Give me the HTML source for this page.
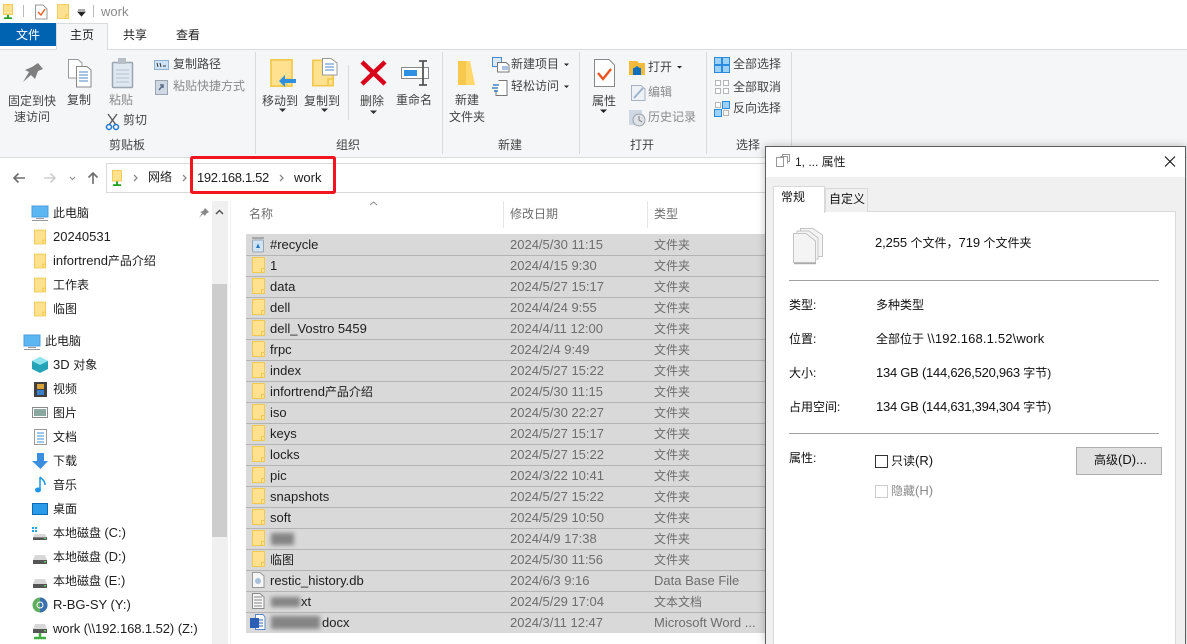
<!DOCTYPE html>
<html><head><meta charset="utf-8"><title>work</title>
<style>
html,body{margin:0;padding:0;background:#fff}
body{width:1187px;height:644px;overflow:hidden;position:relative;font-family:"Liberation Sans","Microsoft YaHei","Noto Sans CJK SC",sans-serif;font-size:12px;color:#1e1e1e}
.b{position:absolute}
.t{position:absolute;white-space:nowrap;line-height:16px;height:16px}
.l{font-size:13px}
.g{color:#8a8a8a}
.d{color:#6d6d6d;font-size:13px}
.r{color:#444}
.y{margin-top:1px}
.blur{position:absolute;background:#858585;filter:blur(2px)}
</style></head><body>
<div class="b" style="left:0;top:50px;width:1187px;height:107px;background:#f5f6f7;border-bottom:1px solid #dadbdc"></div>
<div class="b" style="left:0;top:49px;width:1187px;height:1px;background:#dadbdc"></div>
<div class="b" style="left:0;top:23px;width:56px;height:23px;background:#0063b1"></div>
<div class="b" style="left:56px;top:23px;width:52px;height:27px;background:#f5f6f7;border:1px solid #dadbdc;border-bottom:0;box-sizing:border-box"></div>
<div class="b" style="left:106px;top:163px;width:660px;height:30px;border:1px solid #d9d9d9;box-sizing:border-box"></div>
<div class="b" style="left:255px;top:52px;width:1px;height:102px;background:#dadbdc"></div>
<div class="b" style="left:348px;top:65px;width:1px;height:55px;background:#dadbdc"></div>
<div class="b" style="left:442px;top:52px;width:1px;height:102px;background:#dadbdc"></div>
<div class="b" style="left:579px;top:52px;width:1px;height:102px;background:#dadbdc"></div>
<div class="b" style="left:706px;top:52px;width:1px;height:102px;background:#dadbdc"></div>
<div class="b" style="left:791px;top:52px;width:1px;height:102px;background:#dadbdc"></div>
<div class="b" style="left:212px;top:201px;width:16px;height:443px;background:#f0f0f0"></div>
<div class="b" style="left:212px;top:284px;width:15px;height:253px;background:#cdcdcd"></div>
<div class="b" style="left:230px;top:201px;width:1px;height:443px;background:#f0f0f0"></div>
<div class="b" style="left:503px;top:201px;width:1px;height:27px;background:#e5e5e5"></div>
<div class="b" style="left:647px;top:201px;width:1px;height:27px;background:#e5e5e5"></div>
<div class="b" style="left:246px;top:234px;width:520px;height:1px;background:#d9d9d9"></div>
<div class="b" style="left:246px;top:235px;width:520px;height:398px;background:repeating-linear-gradient(#d9d9d9 0,#d9d9d9 20px,#b4b4b4 20px,#b4b4b4 21px)"></div>

<svg class="b" style="left:0;top:0" width="1187" height="644" viewBox="0 0 1187 644">
<defs>
<symbol id="f" viewBox="0 0 13 16" overflow="visible"><path d="M.5.5H12.5V15.500H.5Z" fill="#ffe18f" stroke="#f2c94f"/><path d="M9.500 15.500V11.500H12.500" fill="#ffe18f" stroke="#f2c94f"/></symbol>
<symbol id="disk" viewBox="0 0 14 9" preserveAspectRatio="none" overflow="visible"><path d="M2 0H12L14 5H0Z" fill="#d8d8d8"/><path d="M0 5H14V9H0Z" fill="#555"/><rect x="11" y="6" width="2" height="1.500" fill="#5fd35f"/></symbol>
<symbol id="net" viewBox="0 0 11 18" preserveAspectRatio="none" overflow="visible"><path d="M.5.5H10.500V12.500H.5Z" fill="#ffe18f" stroke="#f2c94f"/><path d="M5.500 13V16M1 17H10" stroke="#1f9d1f" stroke-width="2"/></symbol>
</defs>
<!-- quick access bar -->
<use href="#net" x="3" y="4" width="10" height="15"/>
<path d="M23.500 5V17" stroke="#bbb"/>
<path d="M35.500 5H43L47 9V19H35.500Z" fill="#fff" stroke="#999"/><path d="M38 12L41 15L45 9" fill="none" stroke="#e8622a" stroke-width="1.500"/>
<use href="#f" x="57" y="4" width="12" height="15"/>
<path d="M78 10H85M78 12L85 12L81.500 16Z" fill="#222" stroke="#222" stroke-width=".8"/>
<path d="M93.500 5V17" stroke="#bbb"/>
<!-- ribbon icons -->
<path d="M38 63L43 69L38 71L35 79L31 75L23 82L29 72L25 70L32 67Z" fill="#7f7f7f"/>
<path d="M68.500 59.500H78L82 63V78H68.500Z" fill="#fff" stroke="#999"/><path d="M76.500 66.500H87L91 70V87H76.500Z" fill="#fff" stroke="#888"/><path d="M79 72H88M79 75H88M79 78H88M79 81H88" stroke="#4f86c6"/>
<rect x="112.500" y="62.500" width="20" height="25" rx="1" fill="#dfe7f1" stroke="#9aa5b2" stroke-width="1.500"/><path d="M116 70H129M116 74H129M116 78H129M116 82H129" stroke="#b6c3d4"/><rect x="118" y="58" width="8" height="6" fill="#b8bec6"/>
<path d="M108 114L116 125M117 114L109 125" stroke="#555" stroke-width="1.300"/><circle cx="109" cy="127" r="2.500" fill="none" stroke="#1e78d0" stroke-width="1.500"/><circle cx="116" cy="127" r="2.500" fill="none" stroke="#1e78d0" stroke-width="1.500"/>
<rect x="154.500" y="60.500" width="14" height="9" fill="#cfe3f7" stroke="#8fb0d0"/><path d="M157 63L158 67M160 63L161 67M163 66H166" stroke="#333"/>
<rect x="155.500" y="80.500" width="12" height="14" fill="#cfd8e3" stroke="#9aa5b2"/><path d="M159 90L163 85M160 85H163V88" stroke="#5b6e88" stroke-width="1.500" fill="none"/>
<use href="#f" x="270" y="59" width="23" height="28"/>
<path d="M296 79H285V75L279 81L285 87V83H296Z" fill="#2f8fe0"/>
<use href="#f" x="312" y="59" width="22" height="28"/>
<path d="M322.500 58.500H331L337 63V75H322.500Z" fill="#fff" stroke="#999"/><path d="M325 64H334M325 67H334M325 70H334" stroke="#4f86c6"/>
<path d="M362 62L385 84M385 62L362 84" stroke="#d9001b" stroke-width="4.500"/>
<rect x="401.500" y="67.500" width="27" height="11" fill="#fff" stroke="#888"/><rect x="404" y="70" width="13" height="6" fill="#2f8fe0"/><path d="M419 61H427M423 61V85M419 85H427" stroke="#555" stroke-width="1.800" fill="none"/>
<path d="M458 61H470L475 85H458Z" fill="#ffd76a"/><path d="M458 61H466V85H458Z" fill="#f6c84d"/>
<rect x="492.500" y="57.500" width="9" height="9" fill="#dceaf8" stroke="#4a86c8"/><path d="M497.500 62.500H506L509 65V72H497.500Z" fill="#fff" stroke="#777"/><path d="M502 67H508M502 69H508" stroke="#4f86c6"/>
<path d="M498.500 80.500H507V95.500H496V90" fill="#fff" stroke="#777"/><path d="M493 85H499M492 88H498M494 91H498" stroke="#1e70c0" stroke-width="1.300"/>
<path d="M564 63.500H569L566.500 66Z" fill="#222"/><path d="M564 85.500H569L566.500 88Z" fill="#222"/>
<path d="M594.500 59.500H609L614.500 65V86.500H594.500Z" fill="#fff" stroke="#888"/><path d="M598 73L603 79L611 69" fill="none" stroke="#e8531f" stroke-width="2.400"/>
<path d="M600 109.500H607L603.500 113Z" fill="#222"/>
<path d="M629 61H637L639 63H645V75H629Z" fill="#f2bb3c"/><path d="M633 75V69L637 66L641 69V75H638V71H636V75Z" fill="#0c6fc0"/><rect x="633" y="68" width="8" height="7" fill="#0c6fc0"/>
<path d="M677 66H682L679.500 68.500Z" fill="#222"/>
<path d="M631.500 85.500H641L645 89V100.500H631.500Z" fill="#eef2f7" stroke="#aab4c0"/><path d="M634 98L643 88" stroke="#9db4cf" stroke-width="2"/>
<rect x="629" y="110" width="13" height="15" fill="#cfd8e3"/><circle cx="639" cy="120" r="6" fill="#dfe3e8" stroke="#9aa0a8"/><path d="M639 116V120L642 122" stroke="#777" fill="none"/>
<g fill="#9fd0f5" stroke="#2a8ae0"><rect x="714.500" y="57.500" width="7" height="7"/><rect x="722.500" y="57.500" width="7" height="7"/><rect x="714.500" y="65.500" width="7" height="7"/><rect x="722.500" y="65.500" width="7" height="7"/></g>
<g fill="#fff" stroke="#b5b5b5"><rect x="715.500" y="80.500" width="5" height="5"/><rect x="723.500" y="80.500" width="5" height="5"/><rect x="715.500" y="88.500" width="5" height="5"/><rect x="723.500" y="88.500" width="5" height="5"/><rect x="715.500" y="102.500" width="5" height="5"/><rect x="723.500" y="110.500" width="5" height="5"/></g>
<g fill="#9fd0f5" stroke="#2a8ae0"><rect x="722.500" y="101.500" width="7" height="7"/><rect x="714.500" y="109.500" width="7" height="7"/></g>
<path d="M279 108.500H286L282.500 112ZM321 108.500H328L324.500 112ZM370 110.500H377L373.500 114Z" fill="#333"/>
<!-- nav buttons -->
<path d="M25 178H14M18.500 173.500L14 178L18.500 182.500" stroke="#6d6d6d" stroke-width="1.600" fill="none"/>
<path d="M44 178H55M50.500 173.500L55 178L50.500 182.500" stroke="#cfcfcf" stroke-width="1.600" fill="none"/>
<path d="M70 177L72.500 179.500L75 177" stroke="#8a8a8a" fill="none"/>
<path d="M93 184V173M88.500 177.500L93 173L97.500 177.500" stroke="#6d6d6d" stroke-width="1.600" fill="none"/>
<use href="#net" x="112" y="170" width="10" height="16"/>
<path d="M134 175L137 178L134 181M183 175L186 178L183 181M280 175L283 178L280 181" stroke="#8a8a8a" stroke-width="1.300" fill="none"/>
<rect x="191.500" y="157.500" width="143" height="35" rx="1" fill="none" stroke="#f2141e" stroke-width="3"/>
<!-- sort arrow -->
<path d="M370 205L373.500 202L377 205" stroke="#8a8a8a" fill="none"/>
<path d="M216 214L219.500 210.500L223 214" stroke="#555" stroke-width="1.500" fill="none"/>
<!-- nav tree icons -->
<g id="pc"><rect x="32" y="206" width="16" height="11" fill="#5cb6f2" stroke="#4a9fdc"/><rect x="36" y="218" width="8" height="1" fill="#999"/><rect x="32" y="220" width="16" height="1" fill="#999"/></g>
<path d="M205 208L209 212L206.500 213.500L205 216L203 214L199 218L202 213L200 212L203 211Z" fill="#8a8a8a"/>
<use href="#f" x="34" y="229" width="12" height="16"/><use href="#f" x="34" y="253" width="12" height="16"/><use href="#f" x="34" y="277" width="12" height="16"/><use href="#f" x="34" y="301" width="12" height="16"/>
<rect x="24" y="335" width="16" height="11" fill="#5cb6f2" stroke="#4a9fdc"/><rect x="28" y="347" width="8" height="1" fill="#999"/><rect x="24" y="349" width="16" height="1" fill="#999"/>
<path d="M40 357L48 361V369L40 373L32 369V361Z" fill="#27a3b8"/><path d="M40 357L48 361L40 365L32 361Z" fill="#8fe4ee"/>
<rect x="34" y="382" width="13" height="15" fill="#3f3f3f"/><rect x="37" y="384" width="7" height="5" fill="#d9a33a"/><rect x="37" y="390" width="7" height="5" fill="#3a7fc9"/>
<rect x="32.500" y="407.500" width="15" height="10" fill="#fff" stroke="#8a8a8a"/><rect x="34" y="409" width="12" height="7" fill="#8aa9a0"/>
<path d="M34.500 429.500H46.500V444.500H34.500Z" fill="#fff" stroke="#9a9a9a"/><path d="M37 433H44M37 436H44M37 439H44M37 442H44" stroke="#3f8fd8"/>
<path d="M37 453H44V461H48L40.500 469L32 461H37Z" fill="#3b8ede"/>
<path d="M40 477V490M40 477C43 480 45 481 45 485" stroke="#1e96e8" stroke-width="1.500" fill="none"/><ellipse cx="38" cy="490" rx="3" ry="2.500" fill="#1e96e8"/>
<rect x="32.500" y="503.500" width="15" height="11" fill="#2a9be8" stroke="#0a6cb8"/>
<rect x="32" y="527" width="2" height="2" fill="#1ea7f0"/><rect x="35" y="527" width="2" height="2" fill="#1ea7f0"/><rect x="32" y="530" width="2" height="2" fill="#1ea7f0"/><rect x="35" y="530" width="2" height="2" fill="#1ea7f0"/>
<use href="#disk" x="33" y="534" width="14" height="6"/>
<use href="#disk" x="33" y="555" width="14" height="9"/>
<use href="#disk" x="33" y="579" width="14" height="9"/>
<circle cx="40" cy="605" r="7.500" fill="#5fae5f"/><path d="M40 597.500A7.500 7.500 0 0 1 40 612.500Z" fill="#3a6fb0"/><circle cx="40" cy="605" r="3" fill="none" stroke="#fff"/>
<use href="#disk" x="33" y="624" width="14" height="9"/><path d="M40 633V637M34 638H46" stroke="#3fae3f" stroke-width="2.500"/>
<!-- file icons -->
<rect x="252.500" y="240" width="11" height="12" rx="1" fill="#cfe3f2" stroke="#9aa5b2"/><path d="M252 238H264" stroke="#999" stroke-width="1.500"/><path d="M256 248L258 243.500L260 248Z" fill="#2278c4"/>
<use href="#f" x="252" y="257" width="13" height="16"/><use href="#f" x="252" y="278" width="13" height="16"/><use href="#f" x="252" y="299" width="13" height="16"/><use href="#f" x="252" y="320" width="13" height="16"/><use href="#f" x="252" y="341" width="13" height="16"/><use href="#f" x="252" y="362" width="13" height="16"/><use href="#f" x="252" y="383" width="13" height="16"/><use href="#f" x="252" y="404" width="13" height="16"/><use href="#f" x="252" y="425" width="13" height="16"/><use href="#f" x="252" y="446" width="13" height="16"/><use href="#f" x="252" y="467" width="13" height="16"/><use href="#f" x="252" y="488" width="13" height="16"/><use href="#f" x="252" y="509" width="13" height="16"/><use href="#f" x="252" y="530" width="13" height="16"/><use href="#f" x="252" y="551" width="13" height="16"/>
<path d="M252.500 572.500H260L264 576V587.500H252.500Z" fill="#f6f6f6" stroke="#999"/><circle cx="258" cy="581" r="3" fill="#a8c0d8"/>
<path d="M252.500 593.500H260L264 597V608.500H252.500Z" fill="#f6f6f6" stroke="#8a8a8a"/><path d="M254 597H262M254 600H262M254 603H262M254 606H262" stroke="#888"/>
<path d="M255.500 614.500H263L265 617V629.500H255.500Z" fill="#fff" stroke="#5a88c8"/><path d="M258 620H263M258 623H263M258 626H263" stroke="#2b5fb3"/><rect x="250" y="618" width="9" height="10" fill="#2b5fb3"/>
</svg>

<span class="t" style="left:101px;top:4px;font-size:13px;color:#8a8a8a">work</span>
<span class="t" style="left:16px;top:27px;color:#fff">文件</span>
<span class="t" style="left:70px;top:27px">主页</span>
<span class="t" style="left:123px;top:27px">共享</span>
<span class="t" style="left:176px;top:27px">查看</span>

<span class="t r" style="left:8px;top:93px">固定到快</span>
<span class="t r" style="left:14px;top:109px">速访问</span>
<span class="t r" style="left:67px;top:92px">复制</span>
<span class="t g" style="left:109px;top:92px">粘贴</span>
<span class="t r" style="left:123px;top:112px">剪切</span>
<span class="t r" style="left:173px;top:56px">复制路径</span>
<span class="t g" style="left:173px;top:78px">粘贴快捷方式</span>
<span class="t r" style="left:109px;top:137px">剪贴板</span>
<span class="t r" style="left:262px;top:93px">移动到</span>
<span class="t r" style="left:304px;top:93px">复制到</span>
<span class="t r" style="left:336px;top:137px">组织</span>
<span class="t r" style="left:360px;top:93px">删除</span>
<span class="t r" style="left:396px;top:92px">重命名</span>
<span class="t r" style="left:455px;top:92px">新建</span>
<span class="t r" style="left:449px;top:109px">文件夹</span>
<span class="t r" style="left:511px;top:56px">新建项目</span>
<span class="t r" style="left:511px;top:78px">轻松访问</span>
<span class="t r" style="left:498px;top:137px">新建</span>
<span class="t r" style="left:592px;top:93px">属性</span>
<span class="t r" style="left:648px;top:59px">打开</span>
<span class="t g" style="left:648px;top:84px">编辑</span>
<span class="t g" style="left:648px;top:109px">历史记录</span>
<span class="t r" style="left:630px;top:137px">打开</span>
<span class="t r" style="left:733px;top:56px">全部选择</span>
<span class="t r" style="left:733px;top:79px">全部取消</span>
<span class="t r" style="left:733px;top:100px">反向选择</span>
<span class="t r" style="left:736px;top:137px">选择</span>

<span class="t" style="left:148px;top:169px">网络</span>
<span class="t l" style="left:197px;top:170px;letter-spacing:-.33px">192.168.1.52</span>
<span class="t l" style="left:294px;top:170px">work</span>

<span class="t" style="left:53px;top:205px">此电脑</span>
<span class="t l" style="left:53px;top:229px">20240531</span>
<span class="t" style="left:53px;top:253px"><span class="l">infortrend</span>产品介绍</span>
<span class="t" style="left:53px;top:277px">工作表</span>
<span class="t" style="left:53px;top:301px">临图</span>
<span class="t" style="left:45px;top:333px">此电脑</span>
<span class="t" style="left:53px;top:357px"><span class="l">3D </span>对象</span>
<span class="t" style="left:53px;top:381px">视频</span>
<span class="t" style="left:53px;top:405px">图片</span>
<span class="t" style="left:53px;top:429px">文档</span>
<span class="t" style="left:53px;top:453px">下载</span>
<span class="t" style="left:53px;top:477px">音乐</span>
<span class="t" style="left:53px;top:501px">桌面</span>
<span class="t" style="left:53px;top:525px">本地磁盘 <span class="l">(C:)</span></span>
<span class="t" style="left:53px;top:549px">本地磁盘 <span class="l">(D:)</span></span>
<span class="t" style="left:53px;top:573px">本地磁盘 <span class="l">(E:)</span></span>
<span class="t l" style="left:53px;top:597px">R-BG-SY (Y:)</span>
<span class="t l" style="left:53px;top:621px;letter-spacing:-.08px">work (\\192.168.1.52) (Z:)</span>

<span class="t" style="left:249px;top:206px;color:#6d6d6d">名称</span>
<span class="t" style="left:510px;top:206px;color:#6d6d6d">修改日期</span>
<span class="t" style="left:654px;top:206px;color:#6d6d6d">类型</span>

<span class="t l" style="left:270px;top:237px">#recycle</span><span class="t d" style="left:510px;top:237px">2024/5/30 11:15</span><span class="t d" style="left:654px;top:237px;font-size:12px">文件夹</span>
<span class="t l" style="left:270px;top:258px">1</span><span class="t d" style="left:510px;top:258px">2024/4/15 9:30</span><span class="t d" style="left:654px;top:258px;font-size:12px">文件夹</span>
<span class="t l" style="left:270px;top:279px">data</span><span class="t d" style="left:510px;top:279px">2024/5/27 15:17</span><span class="t d" style="left:654px;top:279px;font-size:12px">文件夹</span>
<span class="t l" style="left:270px;top:300px">dell</span><span class="t d" style="left:510px;top:300px">2024/4/24 9:55</span><span class="t d" style="left:654px;top:300px;font-size:12px">文件夹</span>
<span class="t l" style="left:270px;top:321px">dell_Vostro 5459</span><span class="t d" style="left:510px;top:321px">2024/4/11 12:00</span><span class="t d" style="left:654px;top:321px;font-size:12px">文件夹</span>
<span class="t l" style="left:270px;top:342px">frpc</span><span class="t d" style="left:510px;top:342px">2024/2/4 9:49</span><span class="t d" style="left:654px;top:342px;font-size:12px">文件夹</span>
<span class="t l" style="left:270px;top:363px">index</span><span class="t d" style="left:510px;top:363px">2024/5/27 15:22</span><span class="t d" style="left:654px;top:363px;font-size:12px">文件夹</span>
<span class="t" style="left:270px;top:384px"><span class="l">infortrend</span>产品介绍</span><span class="t d" style="left:510px;top:384px">2024/5/30 11:15</span><span class="t d" style="left:654px;top:384px;font-size:12px">文件夹</span>
<span class="t l" style="left:270px;top:405px">iso</span><span class="t d" style="left:510px;top:405px">2024/5/30 22:27</span><span class="t d" style="left:654px;top:405px;font-size:12px">文件夹</span>
<span class="t l" style="left:270px;top:426px">keys</span><span class="t d" style="left:510px;top:426px">2024/5/27 15:17</span><span class="t d" style="left:654px;top:426px;font-size:12px">文件夹</span>
<span class="t l" style="left:270px;top:447px">locks</span><span class="t d" style="left:510px;top:447px">2024/5/27 15:22</span><span class="t d" style="left:654px;top:447px;font-size:12px">文件夹</span>
<span class="t l" style="left:270px;top:468px">pic</span><span class="t d" style="left:510px;top:468px">2024/3/22 10:41</span><span class="t d" style="left:654px;top:468px;font-size:12px">文件夹</span>
<span class="t l" style="left:270px;top:489px">snapshots</span><span class="t d" style="left:510px;top:489px">2024/5/27 15:22</span><span class="t d" style="left:654px;top:489px;font-size:12px">文件夹</span>
<span class="t l" style="left:270px;top:510px">soft</span><span class="t d" style="left:510px;top:510px">2024/5/29 10:50</span><span class="t d" style="left:654px;top:510px;font-size:12px">文件夹</span>
<div class="blur" style="left:271px;top:533px;width:23px;height:12px"></div><span class="t d" style="left:510px;top:531px">2024/4/9 17:38</span><span class="t d" style="left:654px;top:531px;font-size:12px">文件夹</span>
<span class="t" style="left:270px;top:552px">临图</span><span class="t d" style="left:510px;top:552px">2024/5/30 11:56</span><span class="t d" style="left:654px;top:552px;font-size:12px">文件夹</span>
<span class="t l" style="left:270px;top:573px">restic_history.db</span><span class="t d" style="left:510px;top:573px">2024/6/3 9:16</span><span class="t d" style="left:654px;top:573px">Data Base File</span>
<div class="blur" style="left:271px;top:597px;width:29px;height:10px"></div><span class="t l" style="left:301px;top:594px">xt</span><span class="t d" style="left:510px;top:594px">2024/5/29 17:04</span><span class="t d" style="left:654px;top:594px;font-size:12px">文本文档</span>
<div class="blur" style="left:271px;top:616px;width:49px;height:13px"></div><span class="t l" style="left:322px;top:615px">docx</span><span class="t d" style="left:510px;top:615px">2024/3/11 12:47</span><span class="t d" style="left:654px;top:615px">Microsoft Word ...</span>

<!-- dialog -->
<div class="b" style="left:765px;top:146px;width:421px;height:498px;box-sizing:border-box;border:1px solid #5f5f5f;border-bottom:0;background:#f0f0f0;box-shadow:0 0 8px rgba(0,0,0,.25);overflow:hidden">
<div class="b" style="left:0;top:0;width:419px;height:30px;background:#fff"></div>
<div class="b" style="left:7px;top:64px;width:403px;height:440px;box-sizing:border-box;border:1px solid #d9d9d9;background:#fff"></div>
<div class="b" style="left:7px;top:39px;width:52px;height:27px;box-sizing:border-box;border:1px solid #d9d9d9;border-bottom:0;background:#fff"></div>
<div class="b" style="left:59px;top:41px;width:43px;height:24px;box-sizing:border-box;border:1px solid #d9d9d9;border-bottom:0;background:#f0f0f0"></div>
<div class="b" style="left:23px;top:133px;width:370px;height:1px;background:#a0a0a0"></div>
<div class="b" style="left:23px;top:286px;width:370px;height:1px;background:#a0a0a0"></div>
<div class="b" style="left:310px;top:300px;width:86px;height:28px;box-sizing:border-box;border:1px solid #adadad;background:#e1e1e1"></div>
<div class="b" style="left:109px;top:308px;width:13px;height:13px;box-sizing:border-box;border:1px solid #333;background:#fff"></div>
<div class="b" style="left:109px;top:338px;width:13px;height:13px;box-sizing:border-box;border:1px solid #ccc;background:#fff"></div>
</div>
<svg class="b" style="left:0;top:0" width="1187" height="644" viewBox="0 0 1187 644">
<path d="M780.500 156.500H787.500V163.500M782.500 156.500V154.500H789.500V161.500H787.500" fill="none" stroke="#999"/><rect x="776.500" y="157.500" width="7" height="9" fill="#fff" stroke="#999"/>
<path d="M1165 156.500L1175 166.500M1175 156.500L1165 166.500" stroke="#111" stroke-width="1.100"/>
<g fill="#f4f4f4" stroke="#c4c4c4"><path d="M800.500 228.500H813L822.500 235V256.500H800.500Z"/><path d="M797 231H809L818 238V259H797Z"/><path d="M793.500 233.500H806L815.500 241V262.500H793.500Z"/></g>
<path d="M794 263.500H816" stroke="#aaa" stroke-width="1.500"/>
</svg>
<span class="t" style="left:795px;top:154px">1, ... 属性</span>
<span class="t" style="left:781px;top:189px;color:#111">常规</span>
<span class="t" style="left:829px;top:191px;color:#111">自定义</span>
<span class="t" style="left:875px;top:235px;color:#111"><span class="l" style="letter-spacing:-.1px">2,255 </span>个文件，<span class="l" style="letter-spacing:-.1px">719 </span>个文件夹</span>
<span class="t" style="left:789px;top:297px;color:#111">类型:</span><span class="t" style="left:876px;top:297px;color:#111">多种类型</span>
<span class="t" style="left:789px;top:331px;color:#111">位置:</span><span class="t" style="left:876px;top:331px;color:#111">全部位于 <span class="l" style="letter-spacing:.15px">\\192.168.1.52\work</span></span>
<span class="t" style="left:789px;top:365px;color:#111">大小:</span><span class="t" style="left:876px;top:365px;color:#111"><span class="l" style="letter-spacing:-.25px">134 GB (144,626,520,963 </span>字节)</span>
<span class="t" style="left:789px;top:399px;color:#111">占用空间:</span><span class="t" style="left:876px;top:399px;color:#111"><span class="l" style="letter-spacing:-.25px">134 GB (144,631,394,304 </span>字节)</span>
<span class="t" style="left:789px;top:450px;color:#111">属性:</span>
<span class="t" style="left:891px;top:453px;color:#111">只读<span class="l">(R)</span></span>
<span class="t" style="left:891px;top:483px;color:#8a8a8a">隐藏<span class="l">(H)</span></span>
<span class="t" style="left:1094px;top:452px;color:#111">高级<span class="l">(D)...</span></span>
</body></html>
